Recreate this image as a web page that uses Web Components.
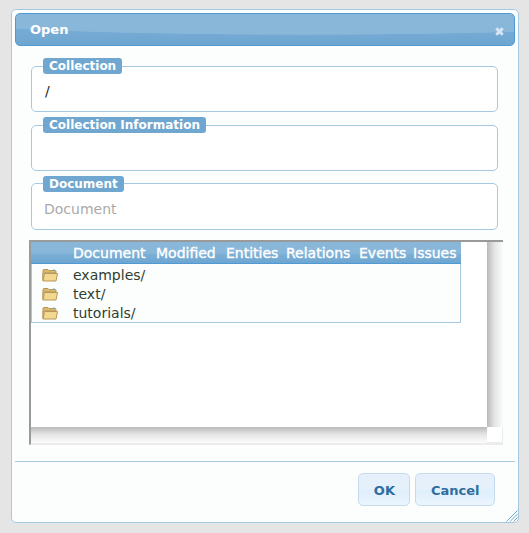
<!DOCTYPE html>
<html>
<head>
<meta charset="utf-8">
<title>Open</title>
<style>
  html, body { margin: 0; height: 533px; overflow: hidden; background: #e5e5e5; }
  body { font-family: "DejaVu Sans", sans-serif; padding: 9px 0 0 11px; box-sizing: border-box; }
</style>
</head>
<body>
<open-dialog heading="Open">
  <form-field label="Collection" value="/"></form-field>
  <form-field label="Collection Information"></form-field>
  <form-field label="Document" placeholder="Document"></form-field>
  <file-browser slot="browser">
    <file-row name="examples/"></file-row>
    <file-row name="text/"></file-row>
    <file-row name="tutorials/"></file-row>
  </file-browser>
  <dialog-button slot="buttons">OK</dialog-button>
  <dialog-button slot="buttons">Cancel</dialog-button>
</open-dialog>

<script>
class OpenDialog extends HTMLElement {
    connectedCallback() {
        this.attachShadow({ mode: 'open' });
        this.shadowRoot.innerHTML = `
            <style>
                :host {
                    display: flex;
                    flex-direction: column;
                    position: relative;
                    box-sizing: border-box;
                    width: 508px;
                    height: 514px;
                    padding: 3px;
                    background: #fcfdfd;
                    border: 1px solid #a6c9e2;
                    border-radius: 5px;
                }

                .titlebar {
                    display: flex;
                    justify-content: space-between;
                    align-items: center;
                    box-sizing: border-box;
                    height: 33px;
                    padding: 0 10px 0 14px;
                    border: 1px solid #4f9ad4;
                    border-radius: 5px;
                    background:
                        radial-gradient(ellipse 420px 21px at 58% 0, #89b7da 97%, rgba(137, 183, 218, 0) 100%),
                        linear-gradient(#7fb0d6, #6ea6d1);
                    color: #fff;
                    font-size: 13px;
                    font-weight: bold;
                }

                .close {
                    width: 9px;
                    height: 9px;
                    margin-top: 3px;
                }

                .fields {
                    display: flex;
                    flex-direction: column;
                    gap: 5px;
                    margin: 12px 17px 0 16px;
                }

                .browser {
                    margin: 10px 0 0 14px;
                }

                .buttons {
                    display: flex;
                    justify-content: flex-end;
                    gap: 5px;
                    margin-top: 16px;
                    padding: 11px 20px 0 0;
                    border-top: 1px solid #a6c9e2;
                }

                .grip {
                    position: absolute;
                    right: 0;
                    bottom: 0;
                    width: 12px;
                    height: 12px;
                }
            </style>
            <div class="titlebar">
                <span>${this.getAttribute('heading')}</span>
                <svg class="close" viewBox="0 0 9 9">
                    <path d="M1.3 1.3 L7.7 7.7 M7.7 1.3 L1.3 7.7" stroke="#d8e5f2" stroke-width="3" fill="none"/>
                </svg>
            </div>
            <div class="fields"><slot></slot></div>
            <div class="browser"><slot name="browser"></slot></div>
            <div class="buttons"><slot name="buttons"></slot></div>
            <svg class="grip" viewBox="0 0 12 12">
                <path d="M0.5 11.5 L11.5 0.5 M4 11.5 L11.5 4 M7.5 11.5 L11.5 7.5" stroke="#6fa7d1" stroke-width="1" fill="none"/>
            </svg>
        `;
    }
}

class FormField extends HTMLElement {
    connectedCallback() {
        this.attachShadow({ mode: 'open' });
        const value = this.getAttribute('value');
        const placeholder = this.getAttribute('placeholder');
        this.shadowRoot.innerHTML = `
            <style>
                :host {
                    display: block;
                }

                /* the Document field's border sits 1px higher under its label */
                :host([placeholder]) {
                    margin-top: -1px;
                }

                :host([placeholder]) fieldset {
                    height: 55px;
                }

                :host([placeholder]) legend {
                    position: relative;
                    top: 1px;
                }

                :host([placeholder]) .value {
                    padding-top: 8px;
                }

                fieldset {
                    box-sizing: border-box;
                    height: 54px;
                    margin: 0;
                    padding: 0 12px 0 13px;
                    min-width: 0;
                    border: 1px solid #a6c9e2;
                    border-radius: 5px;
                    background: #fff;
                }

                legend {
                    box-sizing: border-box;
                    height: 16px;
                    margin-left: -2px;
                    padding: 1px 6px 0;
                    border-radius: 3px;
                    background: #6fa7d1;
                    color: #fff;
                    font-size: 12px;
                    font-weight: bold;
                    line-height: 15px;
                }

                .value {
                    font-size: 14px;
                    line-height: 20px;
                    padding-top: 7px;
                    color: #222;
                }

                .placeholder {
                    color: #aaa;
                    margin-left: -1px;
                }
            </style>
            <fieldset>
                <legend>${this.getAttribute('label')}</legend>
                <div class="value ${placeholder ? 'placeholder' : ''}">${value || placeholder || ''}</div>
            </fieldset>
        `;
    }
}

class FileBrowser extends HTMLElement {
    connectedCallback() {
        this.attachShadow({ mode: 'open' });
        const columns = ['Document', 'Modified', 'Entities', 'Relations', 'Events', 'Issues'];
        this.shadowRoot.innerHTML = `
            <style>
                :host {
                    display: grid;
                    grid-template-columns: 456px 16px;
                    grid-template-rows: 185px 16px;
                    box-sizing: border-box;
                    width: 474px;
                    height: 205px;
                    border-top: 2px solid #9a9a9a;
                    border-left: 2px solid #9a9a9a;
                    border-bottom: 1px solid #ececec;
                    background: #ececec;
                }

                .view {
                    background: #fff;
                }

                .table {
                    box-sizing: border-box;
                    width: 430px;
                    border: 1px solid #a6c9e2;
                    border-top: 0;
                    background: #fcfdfd;
                }

                .head {
                    display: grid;
                    grid-template-columns: 42px 83px 70px 60px 73px 54px 1fr;
                    align-items: center;
                    height: 22px;
                    margin: 0 -1px;
                    border-bottom: 1px solid #4f9ad4;
                    box-sizing: border-box;
                    background: linear-gradient(#89b7da 0, #89b7da 50%, #7aaed5 62%, #6ea6d1 100%);
                    color: #fff;
                    font-size: 14px;
                    -webkit-text-stroke: 0.35px #fff;
                }

                .head span:first-child {
                    grid-column: 2;
                }

                .body {
                    padding: 1px 0 0;
                    height: 58px;
                    box-sizing: border-box;
                }

                .vbar {
                    background: linear-gradient(90deg, #b9b9b9, #e4e4e4 45%, #fbfbfb);
                }

                .hbar {
                    background: linear-gradient(#b9b9b9, #e4e4e4 45%, #fbfbfb);
                }

                .corner {
                    background: #fff;
                    margin: 0 1px 1px 0;
                }
            </style>
            <div class="view">
                <div class="table">
                    <div class="head">${columns.map(c => `<span>${c}</span>`).join('')}</div>
                    <div class="body"><slot></slot></div>
                </div>
            </div>
            <div class="vbar"></div>
            <div class="hbar"></div>
            <div class="corner"></div>
        `;
    }
}

class FileRow extends HTMLElement {
    connectedCallback() {
        this.attachShadow({ mode: 'open' });
        this.shadowRoot.innerHTML = `
            <style>
                :host {
                    display: flex;
                    align-items: center;
                    height: 19px;
                    padding-left: 10px;
                    color: #2f3f2f;
                    font-size: 14px;
                }

                svg {
                    width: 16px;
                    height: 14px;
                    margin-right: 15px;
                }
            </style>
            <svg viewBox="0 0 16 14">
                <path d="M1 12.5 V2.5 Q1 1.5 2 1.5 H6 L7 2.5 H13 Q14 2.5 14 3.5 V5 H1 Z" fill="#d9b96c" stroke="#b9975a" stroke-width="1"/>
                <path d="M11 1.5 H13 V2.5 H11 Z" fill="#5fb7dc"/>
                <path d="M1 13 L2.5 5.5 H15.5 L14 13 Z" fill="#f3d88f" stroke="#b9975a" stroke-width="1" stroke-linejoin="round"/>
            </svg>
            <span>${this.getAttribute('name')}</span>
        `;
    }
}

class DialogButton extends HTMLElement {
    connectedCallback() {
        this.attachShadow({ mode: 'open' });
        this.shadowRoot.innerHTML = `
            <style>
                :host {
                    display: block;
                }

                button {
                    box-sizing: border-box;
                    height: 33px;
                    padding: 2px 14.5px 0;
                    border: 1px solid #c5dbec;
                    border-radius: 5px;
                    background: linear-gradient(#e6f0fa 0, #e6f0fa 48%, #dfeffc 52%, #eaf4fd 100%);
                    color: #2e6e9e;
                    font-family: inherit;
                    font-size: 13px;
                    font-weight: bold;
                }
            </style>
            <button type="button"><slot></slot></button>
        `;
    }
}

customElements.define('open-dialog', OpenDialog);
customElements.define('form-field', FormField);
customElements.define('file-browser', FileBrowser);
customElements.define('file-row', FileRow);
customElements.define('dialog-button', DialogButton);
</script>
</body>
</html>
